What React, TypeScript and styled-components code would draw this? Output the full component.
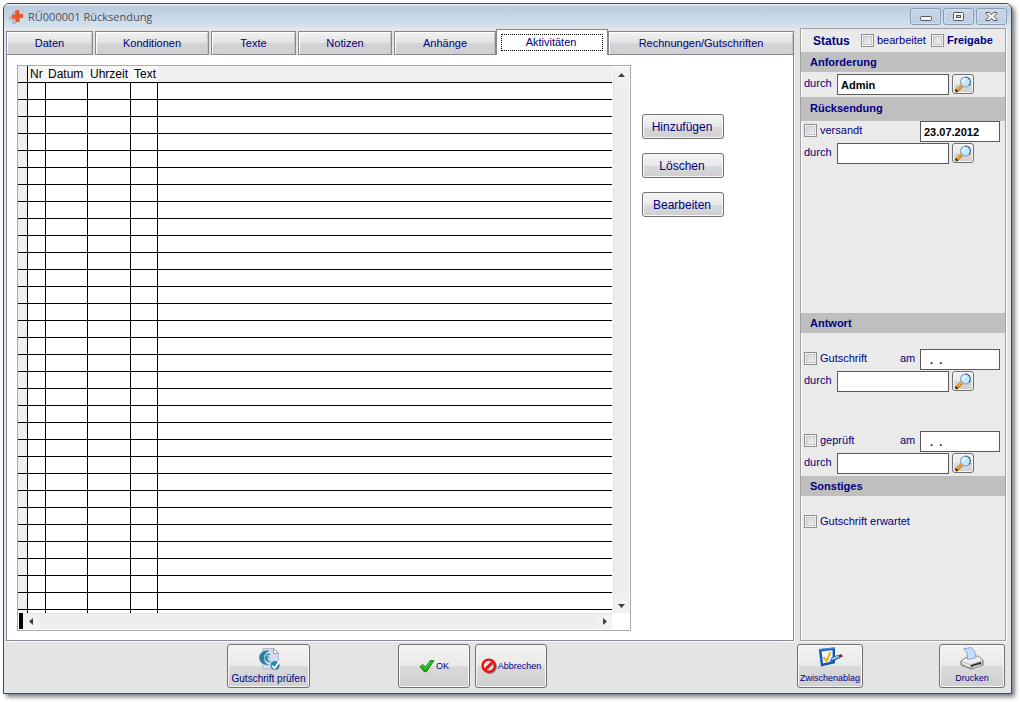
import React from 'react';
import styled, { createGlobalStyle, css } from 'styled-components';

const NAVY = '#000080';
const UI_FONT = '"Liberation Sans", Arial, sans-serif';

const GlobalStyle = createGlobalStyle`
  *, *::before, *::after { box-sizing: border-box; }
  body {
    margin: 0;
    background: #fff;
    font: 11px/14px ${UI_FONT};
    color: ${NAVY};
  }
  button, input { font: inherit; color: inherit; margin: 0; }
`;

const Frame = styled.div`
  display: flex;
  flex-direction: column;
  margin: 3px 8px 8px 3px;
  padding: 0 5px 0 2px;
  border: 1px solid #46484c;
  border-radius: 6px 6px 0 0;
  background: #e4e4e4;
  box-shadow: inset 1px 0 #dce8f5, inset -1px -1px #dce8f5, 3px 3px 4px rgba(0, 0, 0, 0.5);
`;

const TitleBar = styled.header`
  display: flex;
  align-items: center;
  height: 24px;
  margin: 0 -5px 0 -2px;
  padding: 1px 4px 0 5px;
  border-radius: 5px 5px 0 0;
  background: linear-gradient(#e6edf4 0 1px, #bacbdc 2px, #d7e4f1);
`;

const Title = styled.h1`
  flex: 1;
  margin: 0 0 0 4px;
  font: 11px/18px "Open Sans", "Noto Sans", sans-serif;
  color: #4c5058;
`;

const CaptionButtons = styled.div`
  display: flex;
  gap: 2px;
`;

const CaptionButton = styled.button`
  display: flex;
  align-items: center;
  justify-content: center;
  width: 31px;
  height: 17px;
  padding: 0;
  border: 1px solid #8c9db3;
  border-radius: 3px;
  background: linear-gradient(#c9d7e6, #bccde0);
  box-shadow: inset 0 0 0 1px #d3dfec;
`;

const Body = styled.div`
  display: flex;
  gap: 6px;
`;

const Main = styled.main`
  display: flex;
  flex: 1;
  flex-direction: column;
  min-width: 0;
`;

const TabBar = styled.div`
  display: flex;
  align-items: flex-end;
  gap: 2px;
  height: 27px;
`;

const TabGroup = styled.div`
  display: flex;
  flex: 400 1 400px;
  align-items: flex-end;
`;

const Tab = styled.button<{ $size: number; $active?: boolean }>`
  flex: ${p => p.$size} 1 ${p => p.$size}px;
  min-width: 0;
  height: 24px;
  padding: 0;
  border: 1px solid #868892;
  background: linear-gradient(#f2f2f2, #e2e2e2 50%, #d4d4d4 51%, #d0d0d0);
  box-shadow: inset 1px 1px #fff, inset -1px 0 #c2c2c6;
  white-space: nowrap;

  ${p => p.$active && css`
    height: 26px;
    padding: 3px 4px 4px;
    border-width: 1px 1px 0;
    background: #fff;
    box-shadow: none;
  `}
`;

const FocusMark = styled.span`
  display: block;
  padding-right: 2px;
  border: 1px dotted #000;
  line-height: 15px;
`;

const Panel = styled.section`
  display: flex;
  flex: 1;
  align-items: flex-start;
  gap: 11px;
  padding: 10px 69px 9px 10px;
  border: solid #868892;
  border-width: 0 1px 1px;
  background: #fff;
  box-shadow: 1px 1px #fff;
`;

const GridBox = styled.div`
  display: grid;
  grid-template-columns: minmax(0, 1fr) 18px;
  flex: 1;
  min-width: 0;
  border: 1px solid #a9a9af;
`;

const DataTable = styled.table`
  width: 100%;
  border-spacing: 0;
  table-layout: fixed;
  font-size: 12px;
  line-height: 16px;
  color: #000;
`;

const HeadCell = styled.th<{ $width?: number; $edge?: boolean; $blank?: boolean }>`
  width: ${p => (p.$width ? `${p.$width}px` : 'auto')};
  height: 17px;
  padding: 0 0 0 ${p => (p.$width === 27 ? 3 : 2)}px;
  border-bottom: 1px solid #000;
  border-right: ${p => (p.$edge ? '1px solid #000' : 'none')};
  background: ${p => (p.$blank ? '#efefef' : '#f8f8f8')};
  font-weight: normal;
  text-align: left;
  white-space: nowrap;
`;

const Cell = styled.td<{ $marker?: boolean; $last?: boolean }>`
  height: 17px;
  padding: 0;
  border-bottom: 1px solid #000;
  border-right: ${p => (p.$last ? 'none' : '1px solid #000')};
  background: ${p => (p.$marker ? '#efefef' : '#fff')};
`;

const TailRow = styled.tr`
  ${Cell} {
    height: 3px;
    border-bottom: none;
  }
`;

const ScrollBar = styled.div<{ $vertical?: boolean }>`
  display: flex;
  flex-direction: ${p => (p.$vertical ? 'column' : 'row')};
  justify-content: space-between;
  background: #eee;
  ${p => p.$vertical
    ? css`margin: 1px 1px 0 1px; border-left: 1px solid #e4e4e4;`
    : css`height: 16px; margin: 0 0 1px 1px; border-top: 1px solid #e4e4e4;`}
`;

const ScrollStart = styled.div`
  display: flex;
`;

const SplitHandle = styled.div`
  width: 4px;
  margin-top: -1px;
  background: #000;
`;

const ScrollButton = styled.button`
  display: flex;
  align-items: center;
  justify-content: center;
  width: 16px;
  height: 15px;
  padding: 0;
  border: none;
  background: #f1f1f1;
`;

const Actions = styled.div`
  display: flex;
  flex-direction: column;
  gap: 14px;
  width: 82px;
  margin-top: 49px;
`;

const buttonFace = css`
  border: 1px solid #707070;
  border-radius: 3px;
  background: linear-gradient(#f3f3f3, #e9e9e9 50%, #dadada 51%, #cfcfcf);
  box-shadow: inset 0 0 0 1px #f8f8f8;
`;

const ActionButton = styled.button`
  ${buttonFace}
  height: 25px;
  padding: 0 2px 0 0;
  font-size: 12px;
`;

const SideBar = styled.aside`
  display: flex;
  flex-direction: column;
  width: 206px;
  border: 1px solid #a0a0a0;
  background: #eaeaea;
  box-shadow: inset 1px 0 #fff, 1px 1px #fff;
`;

const StatusRow = styled.div`
  display: flex;
  align-items: center;
  height: 23px;
  padding-left: 12px;
`;

const StatusTitle = styled.strong`
  width: 48px;
  font-size: 12px;
`;

const SectionTitle = styled.h2<{ $tall?: boolean }>`
  height: ${p => (p.$tall ? 24 : 20)}px;
  margin: 0;
  padding-left: 9px;
  background: #bfbfbf;
  font-size: 11px;
  line-height: ${p => (p.$tall ? 22 : 20)}px;
`;

const Section = styled.div<{ $top?: number; $minHeight: number }>`
  min-height: ${p => p.$minHeight}px;
  padding: ${p => p.$top ?? 0}px 5px 0 3px;
`;

const FieldRow = styled.div<{ $spaced?: boolean }>`
  display: flex;
  align-items: flex-start;
  height: 22px;
  margin-top: ${p => (p.$spaced ? 38 : 0)}px;
`;

const FieldLabel = styled.label`
  width: 33px;
  line-height: 19px;
`;

const DateLabel = styled.label`
  width: 20px;
  margin-left: auto;
  line-height: 19px;
`;

const CheckLabel = styled.label<{ $strong?: boolean }>`
  display: flex;
  align-items: center;
  gap: 3px;
  margin-right: 5px;
  font-weight: ${p => (p.$strong ? 'bold' : 'normal')};
  line-height: 19px;
`;

const CheckBox = styled.input.attrs({ type: 'checkbox' })`
  appearance: none;
  width: 13px;
  height: 13px;
  border: 1px solid #8e8f8f;
  background: linear-gradient(135deg, #cbcfd5, #f6f6f6);
  box-shadow: inset 0 0 0 1px #f4f4f4, inset 0 0 0 2px #c4c7cc;
`;

const TextInput = styled.input`
  width: 112px;
  height: 21px;
  padding: 0 3px;
  border: 1px solid #5a5a5a;
  background: #fff;
  color: #000;
  font-weight: bold;
`;

const DateInput = styled(TextInput)<{ $push?: boolean }>`
  width: 80px;
  margin-left: ${p => (p.$push ? 'auto' : '0')};
`;

const SearchButton = styled.button`
  ${buttonFace}
  display: flex;
  align-items: center;
  justify-content: center;
  width: 22px;
  height: 20px;
  margin: 0 0 0 3px;
  padding: 0;
`;

const Footer = styled.footer`
  display: flex;
  align-items: center;
  height: 52px;
  padding: 0 1px 2px 221px;
`;

const FooterButton = styled.button<{ $wide?: boolean; $stacked?: boolean }>`
  ${buttonFace}
  display: flex;
  flex-direction: ${p => (p.$stacked ? 'column' : 'row')};
  align-items: center;
  justify-content: ${p => (p.$stacked ? 'space-between' : 'center')};
  gap: 1px;
  width: ${p => (p.$wide ? 83 : p.$stacked ? 66 : 72)}px;
  height: 44px;
  padding: 2px 0;
  font-size: ${p => (p.$wide ? 10 : 9)}px;
  line-height: 14px;
  white-space: nowrap;

  svg { flex: none; }
`;

const FooterGroup = styled.div<{ $gap: number; $end?: boolean }>`
  display: flex;
  gap: ${p => p.$gap}px;
  margin-left: ${p => (p.$end ? 'auto' : '88px')};
`;

const AppIcon = () => (
  <svg width="15" height="16" viewBox="0 0 15 16" aria-hidden="true">
    <path d="M3 3h4v4h3v4H7v4H3v-4H0V7h3z" fill="#b4bac2" />
    <path d="M6 1.500l4-.5.5 3.800 3.500.2.200 4-3.700.2.300 3.800-4 .3-.4-3.800L3 9.800l-.2-4 3.600-.3z" fill="#e8582a" />
  </svg>
);

const Magnifier = () => (
  <svg width="18" height="17" viewBox="0 0 18 17" aria-hidden="true">
    <path d="M2.800 14.500L8.500 9" stroke="#b86f14" strokeWidth="3.400" strokeLinecap="round" />
    <path d="M3 14L8.500 8.600" stroke="#f7a52a" strokeWidth="2.200" strokeLinecap="round" />
    <path d="M1.500 13.800l2 2" stroke="#33220c" strokeWidth="1.800" />
    <circle cx="11.500" cy="6" r="4.900" fill="#bfe9fc" stroke="#93a9cf" strokeWidth="1.200" />
    <path d="M11.500 1.100a4.900 4.900 0 0 1 4.900 4.900a4.900 4.900 0 0 1-2 4" fill="none" stroke="#33518f" strokeWidth="1.200" strokeDasharray="2 1" />
    <path d="M8.800 6.500a3 3 0 0 1 3-3.300" fill="none" stroke="#fff" strokeWidth="1.600" />
  </svg>
);

const EuroDocIcon = () => (
  <svg width="22" height="24" viewBox="0 0 22 24" aria-hidden="true">
    <path d="M5 1.500h11l4.500 4.500v16H5z" fill="#d3d9ee" stroke="#b4bacd" />
    <path d="M15.500 1.500v5h5z" fill="#fff" stroke="#8b90a6" strokeWidth="0.800" />
    <path d="M11 4C5 3 1.500 6.500 1.500 10.800S5 18 10.500 17.600C4.500 15.500 4.500 6.500 11 4z" fill="#2f7c9d" stroke="#2f7c9d" strokeWidth="0.600" />
    <path d="M11 4C4.500 6.500 4.500 15.500 10.500 17.600c3.500-3 3.500-10 .5-13.600z" fill="#bfe0ee" />
    <path d="M12 7.500c-2.800-1.300-4 1-4 3.400s1.300 4.300 4 3.200M6.500 10h4.500M6.500 12h4" fill="none" stroke="#2b6c8d" strokeWidth="1.100" />
    <circle cx="17" cy="18.500" r="4.600" fill="#2586b8" />
    <path d="M14 18.500l2.500 2.800 5-7" fill="none" stroke="#fff" strokeWidth="1.800" />
  </svg>
);

const OkIcon = () => (
  <svg width="16" height="14" viewBox="0 0 16 14" aria-hidden="true">
    <path d="M1 7.500l3-2 2.500 2.500L11.500 1.500l3.300.2L7.500 12.600H5z" fill="#22ab1d" stroke="#118a10" strokeLinejoin="round" />
    <path d="M2.500 7.500l1.500-.8 2.500 2.600L12.500 2.500" fill="none" stroke="#5fd24e" strokeWidth="1" />
  </svg>
);

const CancelIcon = () => (
  <svg width="16" height="16" viewBox="0 0 16 16" aria-hidden="true">
    <circle cx="8.800" cy="8.800" r="6" fill="none" stroke="#777" strokeWidth="2.200" />
    <circle cx="7.700" cy="7.700" r="6.100" fill="#e8e8e8" stroke="#f60808" strokeWidth="2.400" />
    <path d="M5.500 12.300l7-7" stroke="#777" strokeWidth="1.600" />
    <path d="M4 11.400l7.400-7.400" stroke="#f60808" strokeWidth="2.200" />
  </svg>
);

const ClipboardIcon = () => (
  <svg width="25" height="20" viewBox="0 0 25 20" aria-hidden="true">
    <path d="M2.200 3.200l13.600-1.400v13.400L4 18z" fill="#f2f8fe" stroke="#0f57b8" strokeWidth="2.400" />
    <path d="M1 2.600l15.800-1.600" stroke="#3f8fe2" strokeWidth="1.400" />
    <path d="M5.500 10l3 4 4-9" fill="none" stroke="#efac15" strokeWidth="2" />
    <path d="M13.500 12.500l7.500-3" stroke="#1e4f86" strokeWidth="3.600" />
    <path d="M13.500 12.300l7.500-3" stroke="#8fc8f0" strokeWidth="2" />
    <path d="M12 14.500l1.800-2" stroke="#245a94" strokeWidth="1.500" />
    <path d="M21 9.600l3.200-1.300" stroke="#8f2323" strokeWidth="2.800" />
  </svg>
);

const PrinterIcon = () => (
  <svg width="24" height="23" viewBox="0 0 24 23" aria-hidden="true">
    <path d="M1 14l5-3.500 12-1.500 5 4v5l-12 4-10-4z" fill="#c4c4c4" stroke="#777" />
    <path d="M1.500 14l5-3.200 11.500-1.300 4.500 3.500-12 4z" fill="#efefef" />
    <path d="M3.500 1.800l7.500-1.200 3.500 3.200 1.500 7-8.500 1.700-.5-7z" fill="#c9defd" stroke="#83a3dc" />
    <path d="M11 18l10-3v2.200l-10 3z" fill="#222" />
    <path d="M12 19.600l8-2.400 1.500 1.300-8 2.500z" fill="#e6e6e6" stroke="#8a8a8a" strokeWidth="0.600" />
    <path d="M2.500 16l7 3" stroke="#fff" />
  </svg>
);

const Arrow = ({ d }: { d: string }) => (
  <svg width="8" height="8" viewBox="0 0 8 8" aria-hidden="true">
    <path d={d} fill="#404040" />
  </svg>
);

const MinimizeIcon = () => (
  <svg width="12" height="11" viewBox="0 0 12 11" aria-hidden="true">
    <rect x="0.500" y="5.500" width="11" height="4" rx="1" fill="#f6f6f6" stroke="#51565e" />
  </svg>
);

const MaximizeIcon = () => (
  <svg width="11" height="11" viewBox="0 0 11 11" aria-hidden="true">
    <rect x="0.500" y="1.500" width="10" height="8" rx="1" fill="#f6f6f6" stroke="#51565e" />
    <rect x="3.500" y="4.500" width="4" height="2" fill="#bccde0" stroke="#51565e" />
  </svg>
);

const CloseIcon = () => (
  <svg width="13" height="11" viewBox="0 0 13 11" aria-hidden="true">
    <path
      d="M1 1.500h3.500l2 2.300 2-2.300H12v1L9 5.500l3 3v1H8.500l-2-2.300-2 2.300H1v-1l3-3-3-3z"
      fill="#f6f6f6"
      stroke="#51565e"
    />
  </svg>
);

const ROWS = Array.from({ length: 31 }, (_, i) => i);
const COLUMNS = [0, 1, 2, 3, 4, 5];

const RowCells = () => (
  <>
    {COLUMNS.map(c => (
      <Cell key={c} $marker={c === 0} $last={c === 5} />
    ))}
  </>
);

const PersonField = ({ id, value = '' }: { id: string; value?: string }) => (
  <FieldRow>
    <FieldLabel htmlFor={id}>durch</FieldLabel>
    <TextInput id={id} defaultValue={value} />
    <SearchButton type="button" aria-label="Suchen">
      <Magnifier />
    </SearchButton>
  </FieldRow>
);

export default function App() {
  return (
    <>
      <GlobalStyle />
      <Frame>
        <TitleBar>
          <AppIcon />
          <Title>RÜ000001 Rücksendung</Title>
          <CaptionButtons>
            <CaptionButton type="button" aria-label="Minimieren"><MinimizeIcon /></CaptionButton>
            <CaptionButton type="button" aria-label="Maximieren"><MaximizeIcon /></CaptionButton>
            <CaptionButton type="button" aria-label="Schließen"><CloseIcon /></CaptionButton>
          </CaptionButtons>
        </TitleBar>

        <Body>
          <Main>
            <TabBar role="tablist">
              <Tab type="button" role="tab" $size={87}>Daten</Tab>
              <Tab type="button" role="tab" $size={114}>Konditionen</Tab>
              <Tab type="button" role="tab" $size={85}>Texte</Tab>
              <Tab type="button" role="tab" $size={94}>Notizen</Tab>
              <TabGroup>
                <Tab type="button" role="tab" $size={102}>Anhänge</Tab>
                <Tab type="button" role="tab" aria-selected="true" $size={112} $active>
                  <FocusMark>Aktivitäten</FocusMark>
                </Tab>
                <Tab type="button" role="tab" $size={186}>Rechnungen/Gutschriften</Tab>
              </TabGroup>
            </TabBar>

            <Panel>
              <GridBox>
                <DataTable>
                  <thead>
                    <tr>
                      <HeadCell $width={10} $edge $blank />
                      <HeadCell $width={18}>Nr</HeadCell>
                      <HeadCell $width={42}>Datum</HeadCell>
                      <HeadCell $width={43}>Uhrzeit</HeadCell>
                      <HeadCell $width={27}>Text</HeadCell>
                      <HeadCell $blank />
                    </tr>
                  </thead>
                  <tbody>
                    {ROWS.map(r => (
                      <tr key={r}><RowCells /></tr>
                    ))}
                    <TailRow><RowCells /></TailRow>
                  </tbody>
                </DataTable>
                <ScrollBar $vertical>
                  <ScrollButton type="button" aria-label="Nach oben"><Arrow d="M0 6h7L3.500 2z" /></ScrollButton>
                  <ScrollButton type="button" aria-label="Nach unten"><Arrow d="M0 2h7L3.500 6z" /></ScrollButton>
                </ScrollBar>
                <ScrollBar>
                  <ScrollStart>
                    <SplitHandle />
                    <ScrollButton type="button" aria-label="Nach links"><Arrow d="M6 0v7L2 3.500z" /></ScrollButton>
                  </ScrollStart>
                  <ScrollButton type="button" aria-label="Nach rechts"><Arrow d="M3 0v7l4-3.500z" /></ScrollButton>
                </ScrollBar>
              </GridBox>

              <Actions>
                <ActionButton type="button">Hinzufügen</ActionButton>
                <ActionButton type="button">Löschen</ActionButton>
                <ActionButton type="button">Bearbeiten</ActionButton>
              </Actions>
            </Panel>
          </Main>

          <SideBar>
            <StatusRow>
              <StatusTitle>Status</StatusTitle>
              <CheckLabel><CheckBox />bearbeitet</CheckLabel>
              <CheckLabel $strong><CheckBox />Freigabe</CheckLabel>
            </StatusRow>

            <SectionTitle>Anforderung</SectionTitle>
            <Section $top={2} $minHeight={25}>
              <PersonField id="anforderung-durch" value="Admin" />
            </Section>

            <SectionTitle $tall>Rücksendung</SectionTitle>
            <Section $minHeight={192}>
              <FieldRow>
                <CheckLabel><CheckBox />versandt</CheckLabel>
                <DateInput $push aria-label="Versandt am" defaultValue="23.07.2012" />
              </FieldRow>
              <PersonField id="ruecksendung-durch" />
            </Section>

            <SectionTitle>Antwort</SectionTitle>
            <Section $top={16} $minHeight={143}>
              <FieldRow>
                <CheckLabel><CheckBox />Gutschrift</CheckLabel>
                <DateLabel htmlFor="gutschrift-am">am</DateLabel>
                <DateInput id="gutschrift-am" defaultValue="  .  ." />
              </FieldRow>
              <PersonField id="gutschrift-durch" />
              <FieldRow $spaced>
                <CheckLabel><CheckBox />geprüft</CheckLabel>
                <DateLabel htmlFor="geprueft-am">am</DateLabel>
                <DateInput id="geprueft-am" defaultValue="  .  ." />
              </FieldRow>
              <PersonField id="geprueft-durch" />
            </Section>

            <SectionTitle>Sonstiges</SectionTitle>
            <Section $top={16} $minHeight={38}>
              <FieldRow>
                <CheckLabel><CheckBox />Gutschrift erwartet</CheckLabel>
              </FieldRow>
            </Section>
          </SideBar>
        </Body>

        <Footer>
          <FooterButton type="button" $wide $stacked>
            <EuroDocIcon />
            Gutschrift prüfen
          </FooterButton>
          <FooterGroup $gap={5}>
            <FooterButton type="button"><OkIcon />OK</FooterButton>
            <FooterButton type="button"><CancelIcon />Abbrechen</FooterButton>
          </FooterGroup>
          <FooterGroup $gap={76} $end>
            <FooterButton type="button" $stacked>
              <ClipboardIcon />
              Zwischenablag
            </FooterButton>
            <FooterButton type="button" $stacked>
              <PrinterIcon />
              Drucken
            </FooterButton>
          </FooterGroup>
        </Footer>
      </Frame>
    </>
  );
}
